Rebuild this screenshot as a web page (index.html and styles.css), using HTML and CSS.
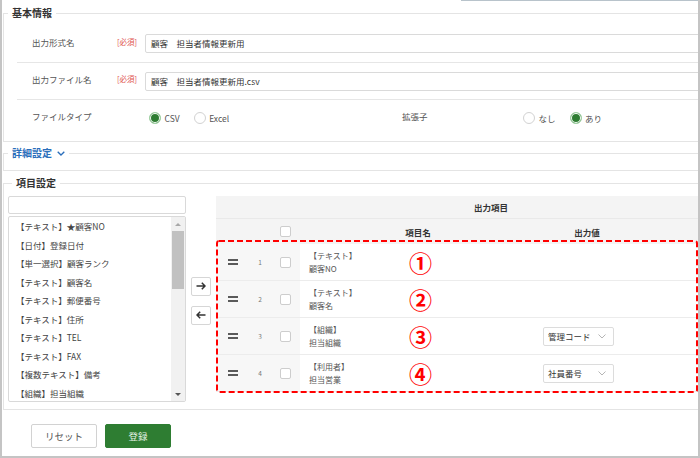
FILE: index.html
```html
<!DOCTYPE html>
<html lang="ja">
<head>
<meta charset="utf-8">
<title>出力形式設定</title>
<link rel="stylesheet" href="styles.css">
</head>
<body>
<div class="window">

  <fieldset class="panel panel-basic">
    <legend class="panel-title">基本情報</legend>
    <div class="form-row">
      <span class="form-label">出力形式名</span>
      <span class="req">[必須]</span>
      <div class="text-input">顧客　担当者情報更新用</div>
    </div>
    <div class="form-row">
      <span class="form-label">出力ファイル名</span>
      <span class="req">[必須]</span>
      <div class="text-input">顧客　担当者情報更新用.csv</div>
    </div>
    <div class="form-row">
      <span class="form-label">ファイルタイプ</span>
      <span class="req"></span>
      <div class="radio-group file-type">
        <label class="radio"><span class="radio-mark on"></span>CSV</label>
        <label class="radio"><span class="radio-mark"></span>Excel</label>
      </div>
      <span class="form-label sub-label">拡張子</span>
      <div class="radio-group">
        <label class="radio"><span class="radio-mark"></span>なし</label>
        <label class="radio"><span class="radio-mark on"></span>あり</label>
      </div>
    </div>
  </fieldset>

  <fieldset class="panel panel-detail">
    <legend class="panel-title link">詳細設定<svg class="legend-chevron" width="8" height="5" viewBox="0 0 8 5"><polyline points="0.7,0.7 4,4 7.3,0.7" fill="none" stroke="#2a6ebb" stroke-width="1.3"/></svg></legend>
  </fieldset>

  <fieldset class="panel panel-items">
    <legend class="panel-title">項目設定</legend>
    <div class="items-body">

      <div class="picker">
        <div class="search-box"></div>
        <div class="list-box">
          <ul class="list-items">
            <li>【テキスト】★顧客NO</li>
            <li>【日付】登録日付</li>
            <li>【単一選択】顧客ランク</li>
            <li>【テキスト】顧客名</li>
            <li>【テキスト】郵便番号</li>
            <li>【テキスト】住所</li>
            <li>【テキスト】TEL</li>
            <li>【テキスト】FAX</li>
            <li>【複数テキスト】備考</li>
            <li>【組織】担当組織</li>
          </ul>
          <div class="scrollbar">
            <span class="sb-arrow up"></span>
            <span class="sb-thumb"></span>
            <span class="sb-space"></span>
            <span class="sb-arrow down"></span>
          </div>
        </div>
      </div>

      <div class="mover">
        <span class="mover-btn"><svg width="10" height="8" viewBox="0 0 10 8"><path d="M0.5 4H9M5.8 0.8L9 4L5.8 7.2" fill="none" stroke="#333" stroke-width="1.5"/></svg></span>
        <span class="mover-btn"><svg width="10" height="8" viewBox="0 0 10 8"><path d="M9.5 4H1M4.2 0.8L1 4L4.2 7.2" fill="none" stroke="#333" stroke-width="1.5"/></svg></span>
      </div>

      <div class="out-table">
        <div class="t-caption">出力項目</div>
        <div class="t-row t-head">
          <span></span>
          <span></span>
          <span class="c-check"><span class="check"></span></span>
          <span class="c-center">項目名</span>
          <span class="c-center">出力値</span>
          <span></span>
        </div>

        <div class="t-row t-body-row">
          <span class="c-handle"><span class="grip"></span></span>
          <span class="c-num">1</span>
          <span class="c-check"><span class="check"></span></span>
          <span class="c-name"><span>【テキスト】</span><span>顧客NO</span></span>
          <span class="c-value"></span>
          <span></span>
        </div>
        <div class="t-row t-body-row">
          <span class="c-handle"><span class="grip"></span></span>
          <span class="c-num">2</span>
          <span class="c-check"><span class="check"></span></span>
          <span class="c-name"><span>【テキスト】</span><span>顧客名</span></span>
          <span class="c-value"></span>
          <span></span>
        </div>
        <div class="t-row t-body-row">
          <span class="c-handle"><span class="grip"></span></span>
          <span class="c-num">3</span>
          <span class="c-check"><span class="check"></span></span>
          <span class="c-name"><span>【組織】</span><span>担当組織</span></span>
          <span class="c-value">
            <span class="select">管理コード<svg width="8" height="5" viewBox="0 0 8 5"><polyline points="0.5,0.5 4,4 7.5,0.5" fill="none" stroke="#b5b5b5" stroke-width="1"/></svg></span>
          </span>
          <span></span>
        </div>
        <div class="t-row t-body-row">
          <span class="c-handle"><span class="grip"></span></span>
          <span class="c-num">4</span>
          <span class="c-check"><span class="check"></span></span>
          <span class="c-name"><span>【利用者】</span><span>担当営業</span></span>
          <span class="c-value">
            <span class="select">社員番号<svg width="8" height="5" viewBox="0 0 8 5"><polyline points="0.5,0.5 4,4 7.5,0.5" fill="none" stroke="#b5b5b5" stroke-width="1"/></svg></span>
          </span>
          <span></span>
        </div>

        <div class="callouts">
          <svg class="callout-frame" width="482" height="153" viewBox="0 0 482 153"><rect x="1" y="1" width="480" height="151" rx="2" fill="none" stroke="#ff0000" stroke-width="2" stroke-dasharray="6 3"/></svg>
          <span class="callout-num">①</span>
          <span class="callout-num">②</span>
          <span class="callout-num">③</span>
          <span class="callout-num">④</span>
        </div>
      </div>

    </div>
  </fieldset>

  <div class="actions">
    <button class="btn btn-reset" type="button">リセット</button>
    <button class="btn btn-submit" type="button">登録</button>
  </div>

</div>
</body>
</html>
```

FILE: styles.css
```css
* {
  box-sizing: border-box;
}

html,
body {
  margin: 0;
  padding: 0;
  background: #fff;
}

body {
  font-family: "Noto Sans CJK JP", "Noto Sans", sans-serif;
  font-size: 8.5px;
  color: #444;
}

/* outer frame */
.window {
  position: relative;
  width: 700px;
  height: 458px;
  overflow: hidden;
  background: #fff;
  border-left: 2px solid #c4c4c4;
  border-right: 2px solid #c4c4c4;
  border-bottom: 2px solid #c4c4c4;
}

.window::before {
  content: "";
  position: absolute;
  top: 0;
  right: 0;
  width: 237px;
  height: 1px;
  background: #b8c3cb;
}

/* fieldset panels */
.panel {
  min-width: 0;
  margin: 0 -40px 0 1px;
  padding: 0;
  border: 1px solid #e4e4e4;
}

.panel-title {
  margin-left: 4px;
  padding: 0 4px;
  font-size: 10px;
  line-height: 14px;
  font-weight: 700;
  color: #333;
}

.panel-title.link {
  color: #2a6ebb;
}

.legend-chevron {
  margin-left: 5px;
  vertical-align: 1px;
}

.panel-basic {
  margin-top: 6px;
  padding: 5px 0;
}

.panel-detail {
  margin-top: 4px;
  padding: 0 0 10px;
}

.panel-items {
  margin-top: 5px;
  padding: 6px 0 7px 4px;
}

/* form rows */
.form-row {
  display: flex;
  align-items: center;
  height: 37px;
  margin-left: 13px;
  padding-left: 15px;
}

.form-row + .form-row {
  border-top: 1px solid #e6e6e6;
}

.form-label {
  width: 85px;
  flex: none;
  color: #555;
  margin-top: -4px;
}

.req {
  width: 28px;
  flex: none;
  font-size: 7.5px;
  color: #e0544f;
  margin-top: -5px;
}

.text-input {
  flex: 1;
  height: 19px;
  padding-left: 5px;
  line-height: 17px;
  color: #333;
  border: 1px solid #dadada;
  border-radius: 2px;
}

.radio-group {
  display: flex;
  align-items: center;
  gap: 14px;
  padding-left: 4px;
}

.radio-group.file-type {
  width: 257px;
  flex: none;
}

.sub-label {
  width: 117px;
  margin-top: -5px;
}

.radio {
  display: flex;
  align-items: center;
  gap: 3.5px;
  color: #555;
}

.radio-mark {
  width: 12px;
  height: 12px;
  border-radius: 50%;
  border: 1px solid #d2d2d2;
  background: #fff;
}

.radio-mark.on {
  border-color: #a3d3a6;
  background: #2e7d32;
  box-shadow: inset 0 0 0 1px #fff;
}

/* item settings */
.items-body {
  display: flex;
  align-items: stretch;
}

.picker {
  width: 178px;
  flex: none;
  display: flex;
  flex-direction: column;
  gap: 2px;
}

.search-box {
  height: 18px;
  border: 1px solid #d9d9d9;
  border-radius: 2px;
}

.list-box {
  height: 186px;
  display: flex;
  overflow: hidden;
  border: 1px solid #d9d9d9;
  border-radius: 2px;
}

.list-items {
  flex: 1;
  margin: 0;
  padding: 0 0 0 7px;
  list-style: none;
}

.list-items li {
  height: 18.5px;
  line-height: 18.5px;
  white-space: nowrap;
  color: #444;
}

.scrollbar {
  width: 14px;
  display: flex;
  flex-direction: column;
  background: #f1f1f1;
}

.sb-arrow {
  height: 14px;
  display: flex;
  align-items: center;
  justify-content: center;
}

.sb-arrow.up::before {
  content: "";
  border-left: 3px solid transparent;
  border-right: 3px solid transparent;
  border-bottom: 3px solid #a8a8a8;
}

.sb-arrow.down::before {
  content: "";
  border-left: 3px solid transparent;
  border-right: 3px solid transparent;
  border-top: 3px solid #555;
}

.sb-thumb {
  height: 58px;
  margin: 0 1px;
  background: #c1c1c1;
}

.sb-space {
  flex: 1;
}

.mover {
  width: 20px;
  flex: none;
  margin: 0 5px;
  padding-top: 3px;
  display: flex;
  flex-direction: column;
  justify-content: center;
  gap: 10px;
}

.mover-btn {
  width: 20px;
  height: 19px;
  display: flex;
  align-items: center;
  justify-content: center;
  background: #fff;
  border: 1px solid #d6d6d6;
  border-radius: 2px;
}

/* output table */
.out-table {
  position: relative;
  width: 550px;
  flex: none;
  align-self: flex-start;
}

.t-caption {
  height: 23px;
  line-height: 22px;
  text-align: center;
  font-weight: 700;
  color: #333;
  background: #f4f4f4;
  border-bottom: 1px solid #e9e9e9;
}

.t-row {
  display: grid;
  grid-template-columns: 34px 20px 30px 236px 102px 128px;
  align-items: center;
}

.t-head {
  height: 25px;
  font-weight: 700;
  color: #333;
  background: #f4f4f4;
}

.c-center {
  text-align: center;
}

.t-body-row {
  height: 37px;
  border-bottom: 1px solid #ececec;
  align-items: stretch;
}

.t-body-row .c-handle,
.t-body-row .c-num,
.t-body-row .c-check {
  background: #f7f7f7;
}

.c-handle {
  display: flex;
  align-items: center;
  padding-left: 12px;
}

.grip {
  width: 10px;
  height: 6px;
  border-top: 2px solid #5a5a5a;
  border-bottom: 2px solid #5a5a5a;
}

.c-num {
  display: flex;
  align-items: center;
  justify-content: center;
  font-size: 6.5px;
  color: #777;
}

.c-check {
  display: flex;
  align-items: center;
  justify-content: center;
}

.check {
  width: 11px;
  height: 11px;
  background: #fff;
  border: 1px solid #cdcdcd;
  border-radius: 2px;
}

.c-name {
  display: flex;
  flex-direction: column;
  justify-content: center;
  padding-left: 9px;
  font-size: 8px;
  line-height: 13px;
  color: #555;
}

.c-value {
  display: flex;
  align-items: center;
  padding-left: 7px;
}

.select {
  width: 71px;
  height: 19px;
  display: flex;
  align-items: center;
  justify-content: space-between;
  padding: 0 7px 0 4px;
  color: #333;
  background: #fff;
  border: 1px solid #dcdcdc;
  border-radius: 2px;
}

/* red callout frame with row markers */
.callouts {
  position: absolute;
  left: 0;
  top: 44px;
  width: 482px;
  height: 153px;
  padding: 4px 0 0 193px;
  display: flex;
  flex-direction: column;
  pointer-events: none;
}

.callout-frame {
  position: absolute;
  left: 0;
  top: 0;
}

.callout-num {
  height: 37px;
  display: flex;
  align-items: center;
  font-size: 23px;
  font-weight: 700;
  line-height: 1;
  color: #ff0000;
}

/* bottom buttons */
.actions {
  display: flex;
  gap: 8px;
  margin: 14px 0 0 29px;
}

.btn {
  width: 66px;
  height: 24px;
  padding: 0;
  display: flex;
  align-items: center;
  justify-content: center;
  font-family: inherit;
  font-size: 9.5px;
  border-radius: 2px;
}

.btn-reset {
  color: #555;
  background: #fff;
  border: 1px solid #d2d2d2;
}

.btn-submit {
  color: #e3f1e4;
  background: #2e7d32;
  border: 1px solid #2e7d32;
}
```
